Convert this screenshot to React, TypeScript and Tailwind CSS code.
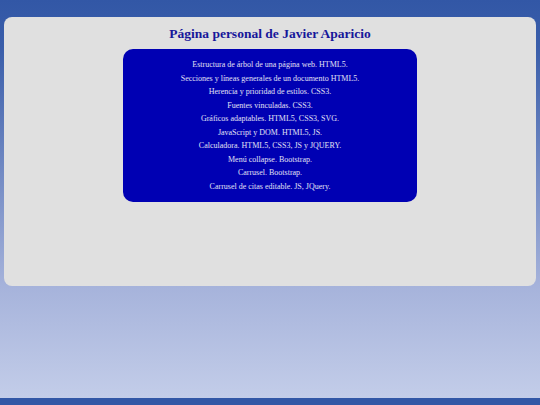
const ITEMS = [
  "Estructura de árbol de una página web. HTML5.",
  "Secciones y líneas generales de un documento HTML5.",
  "Herencia y prioridad de estilos. CSS3.",
  "Fuentes vinculadas. CSS3.",
  "Gráficos adaptables. HTML5, CSS3, SVG.",
  "JavaScript y DOM. HTML5, JS.",
  "Calculadora. HTML5, CSS3, JS y JQUERY.",
  "Menú collapse. Bootstrap.",
  "Carrusel. Bootstrap.",
  "Carrusel de citas editable. JS, JQuery.",
];

export default function App() {
  return (
    <div className="h-[405px] w-[540px] flex flex-col font-['Liberation_Serif',serif]">
      <div className="flex-1 bg-[linear-gradient(to_bottom,#3257a6_0%,#3a5eaa_12%,#a6b3db_72%,#c3cde9_100%)] pt-[17px] px-[4px]">
        <div className="h-[269px] rounded-[8px] bg-[#e0e0e0] flex flex-col items-center pt-[8px]">
          <h1 className="text-[13.5px] leading-[18px] font-bold text-[#17179a]">Página personal de Javier Aparicio</h1>
          <ul className="mt-[6px] w-[294px] h-[153px] rounded-[10px] bg-[#0000b3] pt-[9px] text-center text-[8px] leading-[13.55px] text-[#e0e0f4]">
            {ITEMS.map((t) => (
              <li key={t}>{t}</li>
            ))}
          </ul>
        </div>
      </div>
      <div className="h-[7px] bg-[#3257a6]" />
    </div>
  );
}
